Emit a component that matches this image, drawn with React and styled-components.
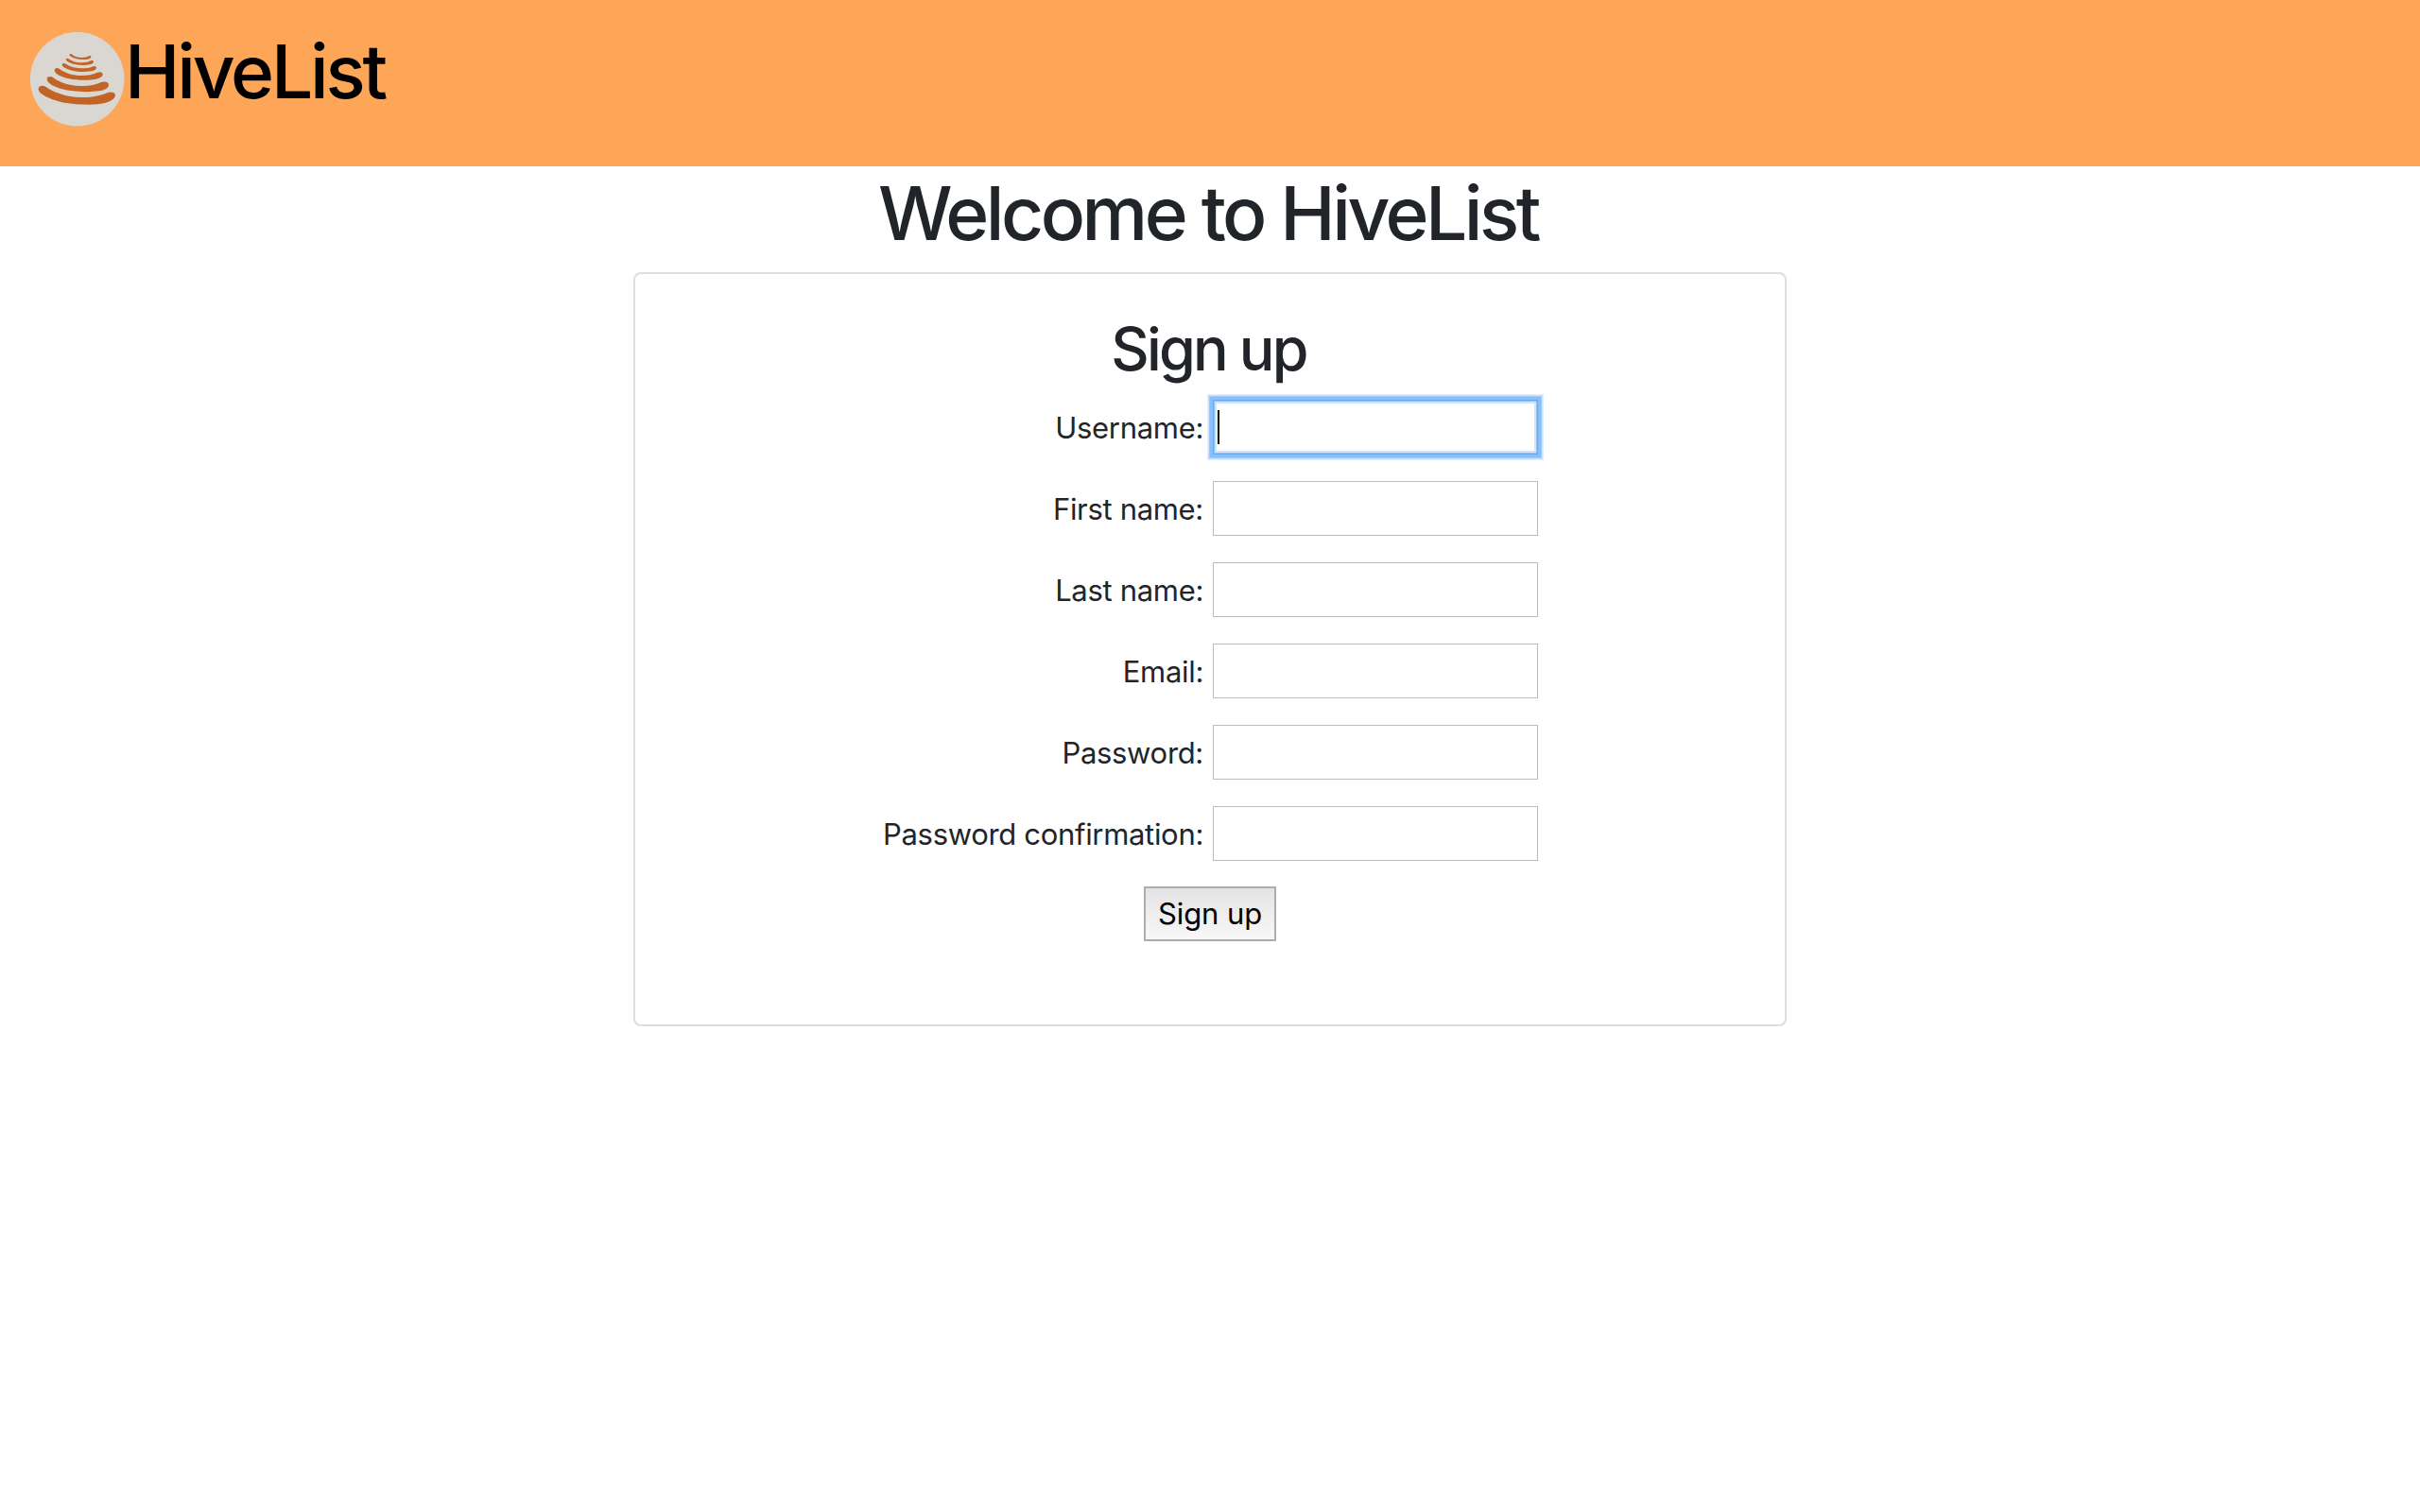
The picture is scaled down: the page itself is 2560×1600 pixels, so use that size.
import React from 'react';
import styled, { createGlobalStyle, css } from 'styled-components';

const Global = createGlobalStyle`
  *, *::before, *::after { box-sizing: border-box; }
  body {
    margin: 0;
    background: #fff;
    color: #212529;
    font-family: Inter, "Liberation Sans", sans-serif;
    font-size: 31px;
  }
`;

const Header = styled.header`
  display: flex;
  align-items: flex-start;
  height: 176px;
  padding: 28px 32px 0;
  background: #fda657;
`;

const Logo = styled.svg`
  display: block;
  width: 100px;
  height: 100px;
  margin-top: 6px;
`;

const Brand = styled.span`
  color: #000;
  font-size: 78.4px;
  font-weight: 510;
  line-height: 96px;
  letter-spacing: -3.2px;
  white-space: nowrap;
`;

const Main = styled.main`
  display: flex;
  flex-direction: column;
  align-items: center;
  padding-top: 2px;
`;

const Title = styled.h1`
  height: 96px;
  margin: 0 4px 14px 0;
  font-size: 78.4px;
  font-weight: 510;
  line-height: 96px;
  letter-spacing: -3.5px;
  white-space: nowrap;
`;

const Card = styled.section`
  display: flex;
  flex-direction: column;
  align-items: center;
  width: 1220px;
  height: 798px;
  padding-top: 40px;
  border: 2px solid #dedede;
  border-radius: 8px;
`;

const CardTitle = styled.h2`
  margin: 0 3px 15px 0;
  font-size: 62.7px;
  font-weight: 510;
  line-height: 78px;
  letter-spacing: -2.8px;
  white-space: nowrap;
`;

const Form = styled.form`
  display: flex;
  flex-direction: column;
  align-items: center;
  gap: 28px;
`;

const Row = styled.div`
  display: grid;
  grid-template-columns: 340px 344px;
  column-gap: 10px;
  align-items: center;
  height: 58px;
`;

const Label = styled.label`
  padding-top: 1px;
  text-align: right;
  font-weight: 430;
  line-height: 48px;
  letter-spacing: -0.32px;
  white-space: nowrap;
`;

const Field = styled.div`
  position: relative;
  display: flex;
`;

const Input = styled.input`
  width: 344px;
  height: 58px;
  padding: 2px 4px;
  border: 1px solid #bcbcbc;
  border-radius: 0;
  outline: none;
  background: #fff;
  font: inherit;
  ${(p) =>
    p.$active &&
    css`
      border-color: #6aa9ec;
      box-shadow:
        inset 0 0 0 1px #8cc2fb,
        inset 0 0 0 3px #cfe5fd,
        0 0 0 3px #88c0fc,
        0 0 0 4px #9bcafc,
        0 0 0 5px #cfe5fe,
        0 0 0 6px #deedfe;
    `}
`;

const Caret = styled.span`
  position: absolute;
  left: 5px;
  top: 11px;
  width: 2px;
  height: 36px;
  background: #000;
`;

const Submit = styled.button`
  width: 140px;
  height: 58px;
  margin-top: -1px;
  padding: 0;
  border: 2px solid #adadad;
  border-radius: 0;
  background: linear-gradient(#e3e3e3, #f8f8f8);
  color: #000;
  font: inherit;
  font-weight: 430;
  line-height: 52px;
  letter-spacing: -0.1px;
`;

const fields = [
  { name: 'username', label: 'Username:', active: true },
  { name: 'first_name', label: 'First name:' },
  { name: 'last_name', label: 'Last name:' },
  { name: 'email', label: 'Email:' },
  { name: 'password1', label: 'Password:', type: 'password' },
  { name: 'password2', label: 'Password confirmation:', type: 'password' },
];

function HiveLogo() {
  return (
    <Logo viewBox="36 42 300 300" aria-hidden="true">
      <circle cx="185" cy="191" r="149.5" fill="#dad6d2" />
      <g fill="#c16425">
        <path d="M62 221C63 212 76 210 86 216C112 234 150 248 196 249C232 250 262 243 282 234C295 230 307 234 306 243C305 254 291 262 270 268C245 274 185 273 145 266C104 257 59 239 62 221Z" />
        <path d="M89 190C90 182 101 181 109 187C131 203 160 212 194 213C222 214 243 210 259 202C271 197 285 200 285 209C284 220 272 226 254 229C230 233 181 232 150 226C118 219 88 206 89 190Z" />
        <path d="M113 162C114 155 122 154 129 159C148 173 171 180 199 180C219 180 235 177 247 171C257 166 267 169 266 177C265 185 254 190 240 192C220 196 182 195 160 190C137 185 112 175 113 162Z" />
        <path d="M137 145C138 140 145 139 151 144C164 153 181 157 201 157C214 157 224 156 232 152C239 148 246 150 246 156C245 162 237 165 228 166C212 169 186 168 169 164C154 160 136 154 137 145Z" />
        <path d="M149 128C150 124 156 124 160 128C170 135 184 139 201 139C213 139 221 137 228 133C232 131 237 132 237 136C236 141 231 144 224 145C211 148 192 147 177 144C164 141 149 134 149 128Z" />
        <path d="M160 114C161 110 166 110 170 114C177 120 187 123 200 123C210 123 217 121 222 118C225 116 229 118 229 121C228 125 223 127 217 128C207 130 192 129 180 126C170 123 160 118 160 114Z" />
      </g>
    </Logo>
  );
}

export default function App() {
  return (
    <>
      <Global />
      <Header>
        <HiveLogo />
        <Brand>HiveList</Brand>
      </Header>
      <Main>
        <Title>Welcome to HiveList</Title>
        <Card>
          <CardTitle>Sign up</CardTitle>
          <Form>
            {fields.map((f) => (
              <Row key={f.name}>
                <Label htmlFor={f.name}>{f.label}</Label>
                <Field>
                  <Input id={f.name} name={f.name} type={f.type || 'text'} $active={f.active} />
                  {f.active && <Caret />}
                </Field>
              </Row>
            ))}
            <Submit type="button">Sign up</Submit>
          </Form>
        </Card>
      </Main>
    </>
  );
}
